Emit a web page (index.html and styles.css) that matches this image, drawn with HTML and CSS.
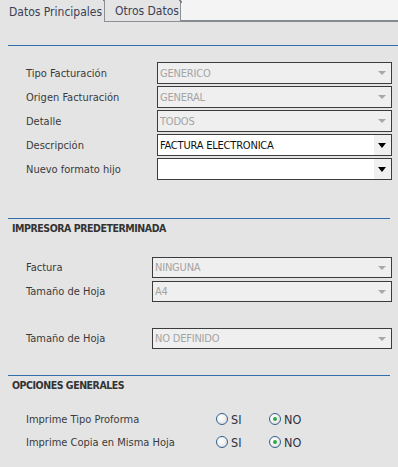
FILE: index.html
```html
<!DOCTYPE html>
<html lang="es">
<head>
<meta charset="utf-8">
<title>Formato</title>
<link rel="stylesheet" href="styles.css">
</head>
<body>
<div class="tabbar">
  <div class="tab tab-active">Datos Principales<span class="corner"></span></div>
  <div class="tab tab-idle">Otros Datos<span class="corner"></span></div>
  <div class="tab-fill"></div>
</div>
<div class="page">
  <div class="rule rule-full"></div>
  <div class="form form-main">
    <div class="row"><span class="label">Tipo Facturación</span><div class="combo disabled"><span class="val">GENERICO</span><span class="arrow"></span></div></div>
    <div class="row"><span class="label">Origen Facturación</span><div class="combo disabled"><span class="val">GENERAL</span><span class="arrow"></span></div></div>
    <div class="row"><span class="label">Detalle</span><div class="combo disabled"><span class="val">TODOS</span><span class="arrow"></span></div></div>
    <div class="row"><span class="label">Descripción</span><div class="combo"><span class="val">FACTURA ELECTRONICA</span><span class="arrow"></span></div></div>
    <div class="row"><span class="label">Nuevo formato hijo</span><div class="combo"><span class="val"></span><span class="arrow"></span></div></div>
  </div>

  <div class="rule rule-sec rule-printer"></div>
  <div class="heading">IMPRESORA PREDETERMINADA</div>
  <div class="form form-printer">
    <div class="row"><span class="label">Factura</span><div class="combo disabled"><span class="val">NINGUNA</span><span class="arrow"></span></div></div>
    <div class="row"><span class="label">Tamaño de Hoja</span><div class="combo disabled"><span class="val">A4</span><span class="arrow"></span></div></div>
    <div class="row row-spaced"><span class="label">Tamaño de Hoja</span><div class="combo disabled"><span class="val">NO DEFINIDO</span><span class="arrow"></span></div></div>
  </div>

  <div class="rule rule-sec rule-opts"></div>
  <div class="heading">OPCIONES GENERALES</div>
  <div class="form form-opts">
    <div class="row opt"><span class="label">Imprime Tipo Proforma</span>
      <div class="radios">
        <span class="radio"><span class="dot"></span>SI</span>
        <span class="radio checked"><span class="dot"></span>NO</span>
      </div>
    </div>
    <div class="row opt"><span class="label">Imprime Copia en Misma Hoja</span>
      <div class="radios">
        <span class="radio"><span class="dot"></span>SI</span>
        <span class="radio checked"><span class="dot"></span>NO</span>
      </div>
    </div>
  </div>
</div>
</body>
</html>
```
FILE: styles.css
```css
* { box-sizing: border-box; }
html, body { margin: 0; padding: 0; }
body {
  width: 398px;
  height: 467px;
  overflow: hidden;
  background: #e4e4e4;
  font-family: "DejaVu Sans Condensed", "DejaVu Sans", sans-serif;
  font-size: 11px;
  color: #3a3a3a;
}

.tabbar {
  display: flex;
  height: 22px;
  background: #f4f4f4;
}
.tab {
  position: relative;
  height: 22px;
  line-height: 20px;
  font-size: 12px;
  color: #3b3f55;
  background: #e4e4e4;
}
.tab-active {
  width: 104px;
  padding-left: 9px;
  padding-top: 2px;
}
.tab-idle {
  width: 77px;
  padding-left: 10px;
  padding-top: 1px;
  border-left: 1px solid #8b9096;
  border-right: 1px solid #8b9096;
  border-bottom: 1px solid #8b9096;
  height: 22px;
}
.corner {
  position: absolute;
  right: -2px;
  top: 0;
  width: 3px;
  height: 3px;
  border-top: 1px solid #6d7278;
  border-right: 1px solid #6d7278;
  border-top-right-radius: 3px;
}
.tab-fill {
  flex: 1;
  border-bottom: 2px solid #858a90;
  height: 22px;
}

.page {
  display: flex;
  flex-direction: column;
}
.rule {
  height: 1px;
  background: #2f6eaa;
  margin-left: 8px;
}
.rule-full { margin-top: 23px; }
.rule-sec { margin-right: 8px; }
.rule-printer { margin-top: 38px; }
.rule-opts { margin-top: 25px; }

.heading {
  margin: 2px 0 0 12px;
  height: 14px;
  line-height: 14px;
  font-weight: bold;
  font-size: 10.5px;
  color: #333;
  letter-spacing: -0.45px;
}

.form {
  display: flex;
  flex-direction: column;
  gap: 2px;
  padding-left: 26px;
  padding-right: 6px;
}
.form-main { margin-top: 16px; }
.form-printer { margin-top: 22px; }
.form-opts { margin-top: 18px; gap: 5px; }

.row {
  display: flex;
  align-items: center;
  height: 22px;
}
.form-printer .row { height: 21px; margin-bottom: 1px; }
.form-printer .row-spaced { margin-top: 23px; }
.label {
  width: 131px;
  flex: none;
  white-space: nowrap;
}
.form-printer .label { width: 126px; }

.combo {
  flex: 1;
  height: 22px;
  display: flex;
  align-items: center;
  border: 1px solid #3c3c3c;
  background: #ffffff;
  color: #111;
  font-size: 11px;
}
.form-printer .combo { height: 21px; }
.combo .val {
  flex: 1;
  padding-left: 2px;
  letter-spacing: -0.2px;
  white-space: nowrap;
}
.combo .arrow {
  width: 17px;
  height: 20px;
  background: #f0f0f0;
  position: relative;
}
.combo .arrow::after {
  content: "";
  position: absolute;
  left: 4px;
  top: 8px;
  border-left: 4px solid transparent;
  border-right: 4px solid transparent;
  border-top: 5px solid #000;
}
.combo.disabled {
  background: #efefef;
  color: #a4a4a4;
}
.combo.disabled .arrow { background: transparent; }
.combo.disabled .arrow::after {
  border-top-color: #a8a8a8;
  border-top-width: 4px;
  top: 8px;
}

.opt { height: 18px; }
.form-opts .label { width: 190px; }
.radios {
  display: flex;
}
.radio {
  display: flex;
  align-items: center;
  gap: 3px;
  width: 53px;
  font-size: 12.5px;
  color: #2f2f3f;
}
.dot {
  width: 12px;
  height: 12px;
  border-radius: 50%;
  border: 1px solid #31618f;
  background: radial-gradient(circle at 35% 35%, #ffffff 0%, #f2f2f2 45%, #cfcfcf 100%);
  position: relative;
}
.radio.checked .dot::after {
  content: "";
  position: absolute;
  left: 3px;
  top: 3px;
  width: 4px;
  height: 4px;
  border-radius: 50%;
  background: #2fa84a;
}
```
